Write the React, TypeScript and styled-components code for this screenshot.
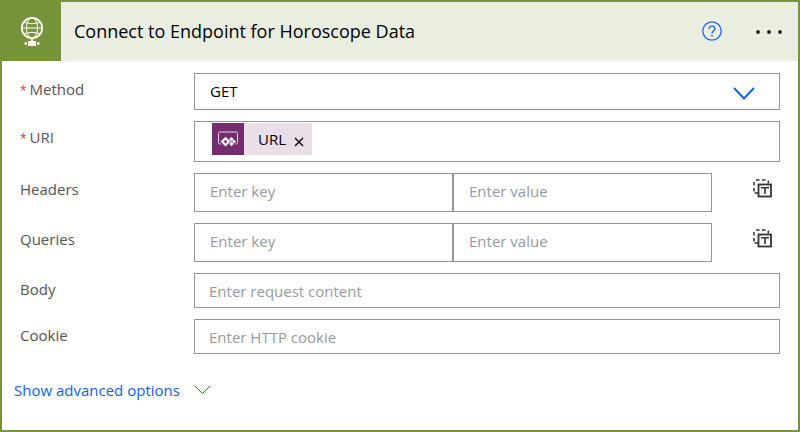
import React from "react";
import styled, { createGlobalStyle } from "styled-components";

const GlobalStyle = createGlobalStyle`
  *, *::before, *::after { box-sizing: border-box; }
  body {
    margin: 0;
    background: #fff;
    color: #000;
    font-family: "Open Sans", "Noto Sans", sans-serif;
    font-size: 15px;
  }
  button, input, select { font: inherit; color: inherit; }
`;

const Card = styled.section`
  display: flex;
  flex-direction: column;
  min-height: 100vh;
  border: 2px solid #76953a;
  background: #fff;
`;

const Header = styled.header`
  display: flex;
  align-items: center;
  height: 59px;
  padding-right: 15px;
  background: #eaeee0;
`;

const Logo = styled.div`
  display: flex;
  align-items: center;
  justify-content: center;
  align-self: stretch;
  width: 59px;
  background: #76953a;
`;

const Title = styled.h1`
  flex: 1;
  margin: 0;
  padding: 0 0 2px 13px;
  font-size: 18px;
  line-height: 24px;
  font-weight: 400;
  white-space: nowrap;
`;

const IconButton = styled.button`
  display: flex;
  padding: 0;
  border: 0;
  background: none;
  cursor: pointer;
`;

const HelpButton = styled(IconButton)`
  margin: 0 33px 2px 0;
`;

const Fields = styled.form`
  display: flex;
  flex-direction: column;
  gap: 11px;
  padding: 12px 18px 0;
`;

const Row = styled.div`
  display: grid;
  grid-template-columns: 174px minmax(0, 1fr);
`;

const Label = styled.label`
  align-self: start;
  color: #555;
  line-height: 32px;
`;

const Star = styled.span`
  margin-right: 3px;
  color: #e03c2b;
  font-size: 12px;
`;

const SelectBox = styled.div`
  display: grid;
  align-items: center;
  height: 37px;
  & > * { grid-area: 1 / 1; }
  & > svg {
    justify-self: end;
    margin: 3px 25px 0 0;
    pointer-events: none;
  }
`;

const Select = styled.select`
  width: 100%;
  height: 100%;
  padding: 0 15px 2px;
  border: 1px solid #969696;
  border-radius: 0;
  background: #fff;
  appearance: none;
`;

const TokenBox = styled.div`
  display: flex;
  height: 41px;
  padding: 1px 17px;
  border: 1px solid #969696;
`;

const Token = styled.span`
  display: flex;
  align-items: center;
  height: 32px;
  padding-right: 8px;
  background: #eadee9;
`;

const TokenIcon = styled.span`
  display: flex;
  align-items: center;
  justify-content: center;
  width: 32px;
  height: 32px;
  margin-right: 14px;
  background: #742b70;
`;

const TokenRemove = styled(IconButton)`
  margin: 5px 0 0 8px;
`;

const TokenInput = styled.input`
  flex: 1;
  min-width: 0;
  border: 0;
  outline: 0;
  background: none;
`;

const TextInput = styled.input<{ $tall?: boolean }>`
  width: 100%;
  min-width: 0;
  height: ${(p) => (p.$tall ? 39 : 35)}px;
  padding: ${(p) => (p.$tall ? "0 15px 3px" : "0 14px")};
  border: 1px solid #969696;
  border-radius: 0;
  background: #fff;
  &::placeholder { color: #959aa3; opacity: 1; }
`;

const PairRow = styled.div`
  display: flex;
`;

const ModeButton = styled(IconButton)`
  flex: none;
  align-self: flex-start;
  width: 68px;
  padding: 6px 0 0 41px;
`;

const Advanced = styled.button`
  display: flex;
  align-items: center;
  align-self: flex-start;
  gap: 14px;
  margin: 24px 0 0 12px;
  padding: 0;
  border: 0;
  background: none;
  color: #0f62f5;
  line-height: 24px;
  cursor: pointer;
`;

const GlobeIcon = () => (
  <svg width="24" height="32" viewBox="0 0 24 32" fill="none" stroke="#fff" aria-hidden="true">
    <circle cx="12" cy="12" r="10.200" strokeWidth="1.800" />
    <ellipse cx="12" cy="12" rx="5.500" ry="10" strokeWidth="1" />
    <path d="M2 12h20M4 6.500q8 2.500 16 0M4 17.500q8-2.500 16 0" strokeWidth="1" />
    <path d="M12 22v3" strokeWidth="2" />
    <path d="M4.500 27.500h15" strokeWidth="2.500" />
    <rect x="8" y="25" width="8" height="5" fill="#fff" stroke="none" />
    <path d="M7.500 26v3M16.500 26v3" stroke="#76953a" strokeWidth="1" />
  </svg>
);

const HelpIcon = () => (
  <svg width="20" height="20" viewBox="0 0 20 20" fill="none" stroke="#1f66f5" aria-hidden="true">
    <circle cx="10" cy="10" r="9.200" strokeWidth="1.300" />
    <path d="M7 7.800C7 6 8.300 5.100 10 5.100s2.900.9 2.900 2.500c0 2.400-2.900 2.300-2.900 4.900" strokeWidth="1.400" />
    <circle cx="10" cy="14.800" r=".9" fill="#1f66f5" stroke="none" />
  </svg>
);

const DotsIcon = () => (
  <svg width="28" height="6" viewBox="0 0 28 6" fill="#222" aria-hidden="true">
    <circle cx="3" cy="3" r="1.900" />
    <circle cx="14" cy="3" r="1.900" />
    <circle cx="25" cy="3" r="1.900" />
  </svg>
);

const Chevron = ({ width, height, weight }: { width: number; height: number; weight: number }) => (
  <svg width={width} height={height} fill="none" stroke="#0f62f5" strokeWidth={weight} aria-hidden="true">
    <path d={`M1 1 L${width / 2} ${height - 1.5} L${width - 1} 1`} />
  </svg>
);

const AppIcon = () => (
  <svg width="20" height="16" viewBox="0 0 20 16" fill="none" aria-hidden="true">
    <path d="M3 13H2Q.5 13 .5 11.500V2.500Q.5 1 2 1h16q1.500 0 1.500 1.500v9Q19.500 13 18 13h-.5" stroke="#e5d3e4" strokeWidth="1" />
    <path d="M7.500 7.200l3.400 3.400L7.500 14l-3.400-3.400z" stroke="#fff" strokeWidth="2.200" />
    <path d="M13.300 5.900l2.200 2.200-2.200 2.200-2.200-2.200zM15.800 8.400l2.200 2.200-2.200 2.200-2.200-2.200zM13.300 10.900l2.200 2.200-2.200 2.200-2.200-2.200z" fill="#fff" />
    <path d="M13.300 8.800l1.800 1.800-1.800 1.800-1.800-1.800z" fill="#c9a9c8" />
  </svg>
);

const CloseIcon = () => (
  <svg width="10" height="10" viewBox="0 0 10 10" stroke="#111" strokeWidth="1.500" aria-hidden="true">
    <path d="M1 1l8 8M9 1L1 9" />
  </svg>
);

const TextModeIcon = () => (
  <svg width="20" height="19" viewBox="0 0 20 19" fill="none" stroke="#333" aria-hidden="true">
    <path d="M3 1h3.500M9 1h3.500M1 3v3.500M1 9v3.500M15.300 1.500v3M1.500 14h4" strokeWidth="1.500" />
    <rect x="5.500" y="5.500" width="12.500" height="12" fill="#fff" strokeWidth="1.800" />
    <path d="M8 8.700h8M12 8.700V15" strokeWidth="1.600" />
  </svg>
);

const PairField = ({ id, label }: { id: string; label: string }) => (
  <Row>
    <Label htmlFor={id}>{label}</Label>
    <PairRow>
      <TextInput $tall id={id} placeholder="Enter key" />
      <TextInput $tall aria-label={`${label} value`} placeholder="Enter value" />
      <ModeButton type="button" aria-label={`Switch ${label} to text mode`}>
        <TextModeIcon />
      </ModeButton>
    </PairRow>
  </Row>
);

const TextField = ({ id, label, placeholder }: { id: string; label: string; placeholder: string }) => (
  <Row>
    <Label htmlFor={id}>{label}</Label>
    <TextInput id={id} placeholder={placeholder} />
  </Row>
);

export default function App() {
  return (
    <>
      <GlobalStyle />
      <Card>
        <Header>
          <Logo><GlobeIcon /></Logo>
          <Title>Connect to Endpoint for Horoscope Data</Title>
          <HelpButton type="button" aria-label="Help"><HelpIcon /></HelpButton>
          <IconButton type="button" aria-label="More commands"><DotsIcon /></IconButton>
        </Header>
        <Fields>
          <Row>
            <Label htmlFor="method"><Star>*</Star>Method</Label>
            <SelectBox>
              <Select id="method" defaultValue="GET">
                <option>GET</option>
              </Select>
              <Chevron width={22} height={13} weight={2} />
            </SelectBox>
          </Row>
          <Row>
            <Label htmlFor="uri"><Star>*</Star>URI</Label>
            <TokenBox>
              <Token>
                <TokenIcon><AppIcon /></TokenIcon>
                URL
                <TokenRemove type="button" aria-label="Remove URL"><CloseIcon /></TokenRemove>
              </Token>
              <TokenInput id="uri" />
            </TokenBox>
          </Row>
          <PairField id="headers" label="Headers" />
          <PairField id="queries" label="Queries" />
          <TextField id="body" label="Body" placeholder="Enter request content" />
          <TextField id="cookie" label="Cookie" placeholder="Enter HTTP cookie" />
        </Fields>
        <Advanced type="button">
          Show advanced options
          <Chevron width={17} height={10} weight={1} />
        </Advanced>
      </Card>
    </>
  );
}
